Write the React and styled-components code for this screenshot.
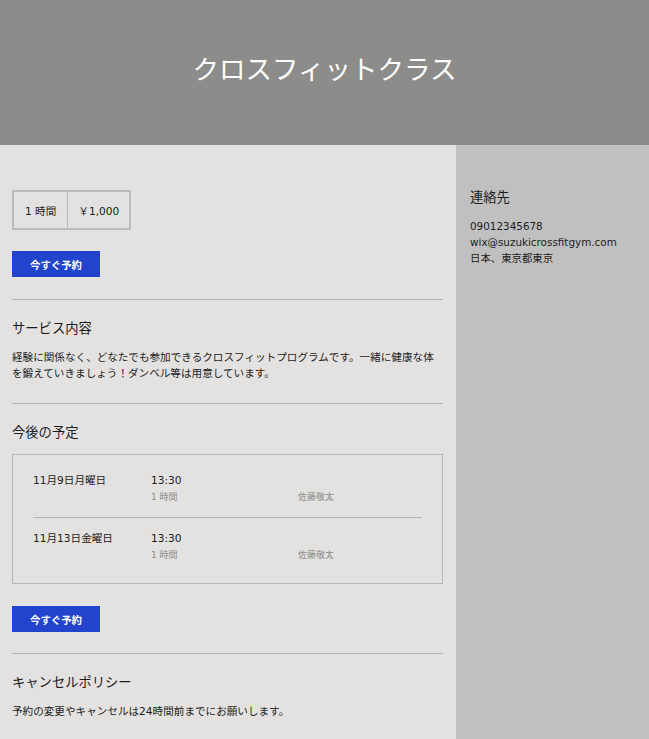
import React from 'react';
import styled, { createGlobalStyle } from 'styled-components';

const GlobalStyle = createGlobalStyle`
  html, body {
    margin: 0;
    padding: 0;
    background: #e3e2e0;
  }
  body {
    font-family: "DejaVu Sans", "Noto Sans CJK JP", sans-serif;
    color: #1c1c1c;
  }
  * {
    box-sizing: border-box;
  }
`;

const Page = styled.div`
  width: 649px;
  min-height: 739px;
  display: flex;
  flex-direction: column;
`;

const Header = styled.header`
  height: 145px;
  background: #8c8c8a;
  display: flex;
  align-items: center;
  justify-content: center;
`;

const PageTitle = styled.h1`
  margin: 0 0 8px;
  font-family: "Noto Sans CJK JP", sans-serif;
  font-size: 26.5px;
  font-weight: 400;
  color: #ffffff;
  line-height: 1;
`;

const Body = styled.div`
  flex: 1;
  display: grid;
  grid-template-columns: 456px 1fr;
`;

const Main = styled.main`
  background: #e3e2e0;
  padding: 45px 13px 30px 12px;
  display: flex;
  flex-direction: column;
`;

const Sidebar = styled.aside`
  background: #c0c0c0;
  padding: 44px 14px 0;
`;

const PriceTable = styled.div`
  display: inline-flex;
  align-self: flex-start;
  height: 40px;
  border: 2px solid #bcbbb9;
`;

const PriceCell = styled.div`
  display: flex;
  align-items: center;
  padding: 0 ${(p) => p.$pad}px;
  font-size: 10.6px;
  border-left: ${(p) => (p.$first ? 'none' : '1px solid #bcbbb9')};
`;

const BookButton = styled.button`
  align-self: flex-start;
  width: 88px;
  height: 26px;
  margin-top: ${(p) => p.$top}px;
  border: none;
  background: #2243cc;
  color: #ffffff;
  font-family: "Noto Sans CJK JP", sans-serif;
  font-size: 10.4px;
  font-weight: 600;
  cursor: pointer;
`;

const Divider = styled.hr`
  margin: ${(p) => p.$top}px 0 0;
  border: none;
  border-top: 1px solid #b7b6b4;
  width: 100%;
`;

const SectionTitle = styled.h2`
  margin: 20px 0 0;
  font-size: 13.3px;
  font-weight: 400;
  line-height: 18px;
`;

const Text = styled.p`
  margin: 11px 0 0;
  font-size: 10.6px;
  line-height: 16px;
`;

const Schedule = styled.div`
  margin-top: 12px;
  border: 1px solid #b7b6b4;
  padding: 4px 20px 8px;
`;

const Slot = styled.div`
  display: grid;
  grid-template-columns: 118px 147px 1fr;
  padding: ${(p) => (p.$first ? 13 : 12)}px 0 13px;
  border-top: ${(p) => (p.$first ? 'none' : '1px solid #b7b6b4')};
`;

const SlotDate = styled.div`
  font-size: 10.6px;
  line-height: 16px;
`;

const SlotTime = styled.div`
  grid-column: 2;
  font-size: 10.6px;
  line-height: 16px;
`;

const SlotMeta = styled.div`
  grid-column: ${(p) => p.$col};
  margin-top: 2px;
  font-size: 9px;
  line-height: 14px;
  color: #8d8c8a;
`;

const ContactTitle = styled.h3`
  margin: 0;
  font-size: 13.3px;
  font-weight: 400;
  line-height: 18px;
`;

const ContactList = styled.div`
  margin-top: 11px;
  display: flex;
  flex-direction: column;
  font-size: 10.4px;
  line-height: 16px;
`;

const slots = [
  { date: '11月9日月曜日', time: '13:30', length: '1 時間', staff: '佐藤敬太' },
  { date: '11月13日金曜日', time: '13:30', length: '1 時間', staff: '佐藤敬太' },
];

export default function App() {
  return (
    <Page>
      <GlobalStyle />
      <Header>
        <PageTitle>クロスフィットクラス</PageTitle>
      </Header>
      <Body>
        <Main>
          <PriceTable>
            <PriceCell $first $pad={11}>1 時間</PriceCell>
            <PriceCell $pad={10}>￥1,000</PriceCell>
          </PriceTable>
          <BookButton $top={21}>今すぐ予約</BookButton>
          <Divider $top={22} />

          <SectionTitle>サービス内容</SectionTitle>
          <Text>
            経験に関係なく、どなたでも参加できるクロスフィットプログラムです。一緒に健康な体を鍛えていきましょう！ダンベル等は用意しています。
          </Text>
          <Divider $top={22} />

          <SectionTitle>今後の予定</SectionTitle>
          <Schedule>
            {slots.map((s, i) => (
              <Slot key={s.date} $first={i === 0}>
                <SlotDate>{s.date}</SlotDate>
                <SlotTime>{s.time}</SlotTime>
                <SlotMeta $col={2}>{s.length}</SlotMeta>
                <SlotMeta $col={3}>{s.staff}</SlotMeta>
              </Slot>
            ))}
          </Schedule>
          <BookButton $top={22}>今すぐ予約</BookButton>
          <Divider $top={21} />

          <SectionTitle>キャンセルポリシー</SectionTitle>
          <Text>予約の変更やキャンセルは24時間前までにお願いします。</Text>
        </Main>
        <Sidebar>
          <ContactTitle>連絡先</ContactTitle>
          <ContactList>
            <span>09012345678</span>
            <span>wix@suzukicrossfitgym.com</span>
            <span>日本、東京都東京</span>
          </ContactList>
        </Sidebar>
      </Body>
    </Page>
  );
}
